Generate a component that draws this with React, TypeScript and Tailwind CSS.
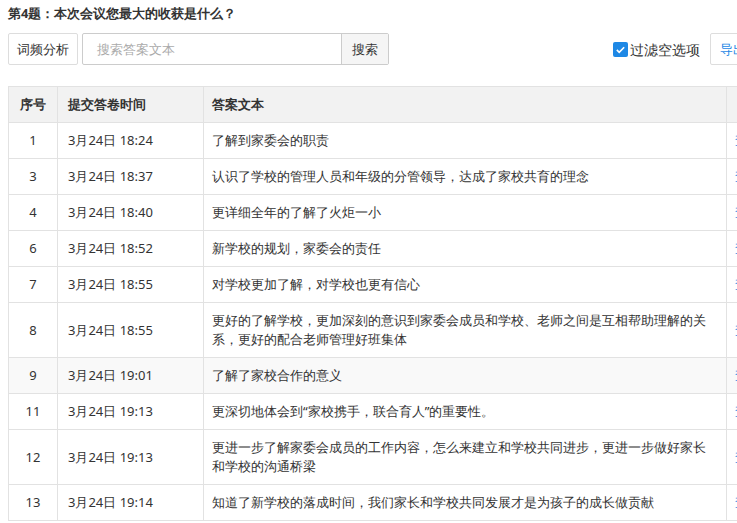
const rows: [string, string, string][] = [
  ["1", "3月24日 18:24", "了解到家委会的职责"],
  ["3", "3月24日 18:37", "认识了学校的管理人员和年级的分管领导，达成了家校共育的理念"],
  ["4", "3月24日 18:40", "更详细全年的了解了火炬一小"],
  ["6", "3月24日 18:52", "新学校的规划，家委会的责任"],
  ["7", "3月24日 18:55", "对学校更加了解，对学校也更有信心"],
  ["8", "3月24日 18:55", "更好的了解学校，更加深刻的意识到家委会成员和学校、老师之间是互相帮助理解的关系，更好的配合老师管理好班集体"],
  ["9", "3月24日 19:01", "了解了家校合作的意义"],
  ["11", "3月24日 19:13", "更深切地体会到“家校携手，联合育人”的重要性。"],
  ["12", "3月24日 19:13", "更进一步了解家委会成员的工作内容，怎么来建立和学校共同进步，更进一步做好家长和学校的沟通桥梁"],
  ["13", "3月24日 19:14", "知道了新学校的落成时间，我们家长和学校共同发展才是为孩子的成长做贡献"],
];

export default function App() {
  return (
    <div className="h-[523px] w-[737px] overflow-hidden bg-white text-[13px] leading-[19px] text-[#333] [font-family:'Liberation_Sans','Noto_Sans_CJK_SC',sans-serif]">
      <div className="px-[8px] pt-[4px] font-bold leading-[18px]">第4题：本次会议您最大的收获是什么？</div>
      <div className="mt-[11px] flex h-[32px] w-[760px] items-center pl-[8px]">
        <div className="flex h-[32px] items-center rounded-[2px] border border-[#ddd] px-[8px]">词频分析</div>
        <div className="ml-[4px] flex h-[32px] items-center rounded-[2px] border border-[#ccc]">
          <div className="w-[258px] px-[14px] text-[#aaa]">搜索答案文本</div>
          <div className="flex h-full items-center border-l border-[#ccc] bg-[#f5f5f5] px-[10px]">搜索</div>
        </div>
        <div className="ml-auto flex items-center gap-[2px] text-[14px]">
          <span className="flex h-[15px] w-[15px] items-center justify-center rounded-[2px] bg-[#1e88e5]">
            <svg width="11" height="11" viewBox="0 0 12 12"><path d="M2 6.5l2.6 2.5L10 3.5" fill="none" stroke="#fff" strokeWidth="1.8" /></svg>
          </span>
          过滤空选项
        </div>
        <div className="ml-[10px] flex h-[32px] w-[50px] items-center whitespace-nowrap rounded-[2px] border border-[#ddd] pl-[9px] text-[#1e88e5]">导出</div>
      </div>
      <table className="ml-[8px] mt-[21px] w-[770px] table-fixed border-collapse">
        <thead>
          <tr className="bg-[#f2f2f2] text-left font-bold">
            <th className="h-[36px] w-[49px] border border-[#e2e2e2] p-0 text-center">序号</th>
            <th className="w-[146px] border border-[#e2e2e2] px-[10px]">提交答卷时间</th>
            <th className="w-[523px] border border-[#e2e2e2] px-[8px]">答案文本</th>
            <th className="border border-[#e2e2e2]"></th>
          </tr>
        </thead>
        <tbody>
          {rows.map(([n, t, a]) => (
            <tr key={n} className={n === "9" ? "bg-[#f9f9f9]" : ""}>
              <td className="h-[36px] border border-[#e2e2e2] p-0 text-center">{n}</td>
              <td className="whitespace-nowrap border border-[#e2e2e2] px-[10px] py-0">{t}</td>
              <td className="border border-[#e2e2e2] px-[8px] py-[8px]">{a}</td>
              <td className="whitespace-nowrap border border-[#e2e2e2] px-[8px] py-0 text-[#1e88e5]">查看</td>
            </tr>
          ))}
        </tbody>
      </table>
    </div>
  );
}
